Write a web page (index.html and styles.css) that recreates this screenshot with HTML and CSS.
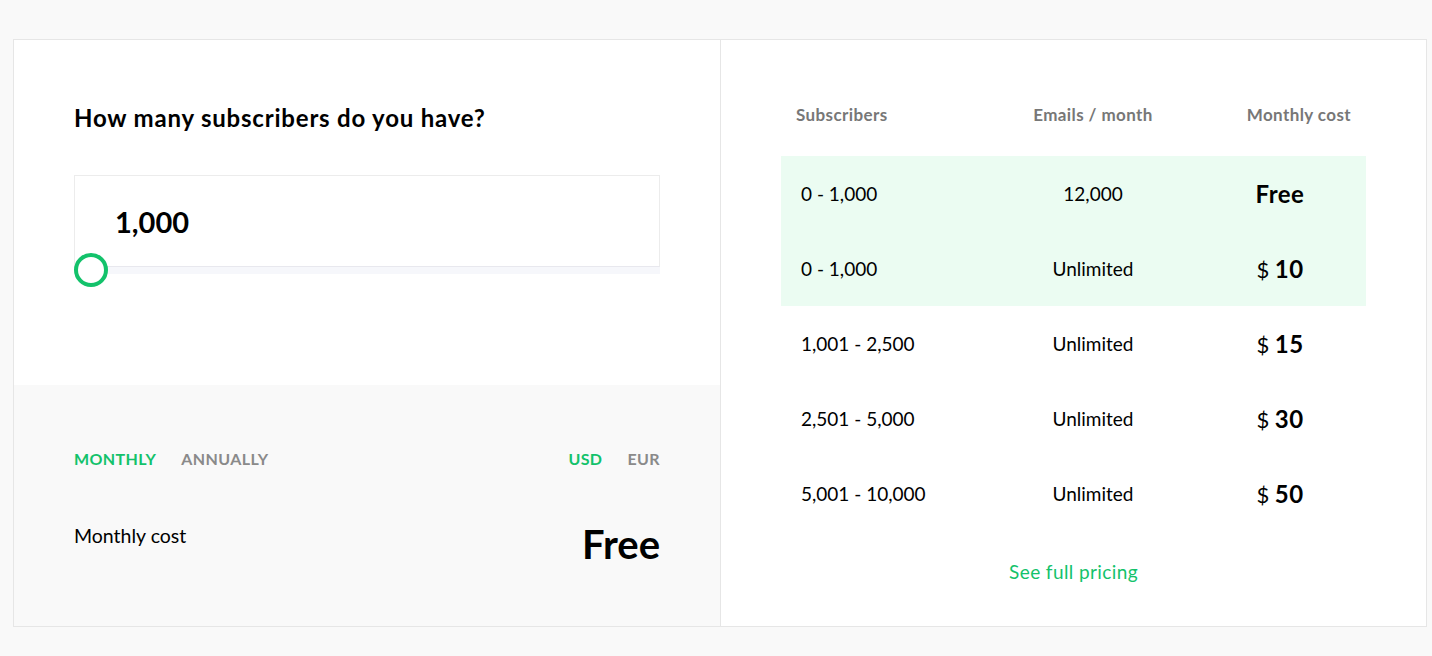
FILE: index.html
```html
<!DOCTYPE html>
<html lang="en">

<head>
    <meta charset="utf-8">
    <meta name="viewport" content="width=device-width, initial-scale=1.0">
    <title>Pricing</title>
    <link rel="stylesheet" href="styles.css">
</head>

<body>
    <section class="kort">
        <div class="venstre">
            <div class="beregner">
                <h2>How many subscribers do you have?</h2>
                <div class="felt">
                    <p class="antal">1,000</p>
                </div>
                <div class="spor">
                    <span class="knop"></span>
                </div>
            </div>
            <div class="resultat">
                <div class="skift">
                    <nav>
                        <button class="valgt">MONTHLY</button>
                        <button>ANNUALLY</button>
                    </nav>
                    <nav>
                        <button class="valgt">USD</button>
                        <button>EUR</button>
                    </nav>
                </div>
                <div class="pris-linje">
                    <p>Monthly cost</p>
                    <p class="pris">Free</p>
                </div>
            </div>
        </div>
        <div class="hojre">
            <div class="tabel">
                <div class="raekke hoved">
                    <span>Subscribers</span>
                    <span>Emails / month</span>
                    <span>Monthly cost</span>
                </div>
                <div class="raekke aktiv">
                    <span>0 - 1,000</span>
                    <span>12,000</span>
                    <span><b>Free</b></span>
                </div>
                <div class="raekke aktiv">
                    <span>0 - 1,000</span>
                    <span>Unlimited</span>
                    <span>$ <b>10</b></span>
                </div>
                <div class="raekke">
                    <span>1,001 - 2,500</span>
                    <span>Unlimited</span>
                    <span>$ <b>15</b></span>
                </div>
                <div class="raekke">
                    <span>2,501 - 5,000</span>
                    <span>Unlimited</span>
                    <span>$ <b>30</b></span>
                </div>
                <div class="raekke">
                    <span>5,001 - 10,000</span>
                    <span>Unlimited</span>
                    <span>$ <b>50</b></span>
                </div>
            </div>
            <a href="#" class="fuld">See full pricing</a>
        </div>
    </section>
</body>

</html>
```

FILE: styles.css
```css
body {
    margin: 0;
    padding: 39px 5px 29px 13px;
    font-family: 'Lato', sans-serif;
    background: #f9f9f9;
    color: #000;
}

p {
    margin: 0;
}

.kort {
    display: flex;
    width: 1412px;
    height: 586px;
    background: #fff;
    border: 1px solid #e6e6e6;
}

.venstre {
    width: 706px;
    display: flex;
    flex-direction: column;
    border-right: 1px solid #e6e6e6;
}

.beregner {
    height: 345px;
    padding: 0 60px;
}

h2 {
    margin: 63px 0 0;
    font-size: 24px;
    font-weight: 700;
    line-height: 30px;
    letter-spacing: 0.8px;
}

.felt {
    margin-top: 42px;
    height: 90px;
    border: 1px solid #ececec;
    border-bottom-color: #e8e8ee;
    display: flex;
    align-items: center;
}

.antal {
    margin-left: 40px;
    font-size: 29px;
    font-weight: 700;
}

.spor {
    position: relative;
    height: 7px;
    background: #f6f7fb;
}

.knop {
    position: absolute;
    left: 0;
    top: -14px;
    width: 26px;
    height: 26px;
    border: 4px solid #13c26b;
    border-radius: 50%;
    background: #fff;
}

.resultat {
    flex: 1;
    background: #f9f9f9;
    padding: 64px 60px 0;
}

.skift {
    display: flex;
    justify-content: space-between;
}

nav {
    display: flex;
    gap: 25px;
}

button {
    background: none;
    border: none;
    padding: 0;
    font-family: 'Lato', sans-serif;
    font-size: 16px;
    font-weight: 700;
    line-height: 20px;
    letter-spacing: 0.4px;
    color: #8a8a8a;
}

button.valgt {
    color: #13c26b;
}

.pris-linje {
    margin-top: 55px;
    display: flex;
    justify-content: space-between;
    align-items: flex-start;
}

.pris-linje p {
    font-size: 19.5px;
    line-height: 24px;
}

.pris-linje .pris {
    margin-top: -4px;
    font-size: 40px;
    line-height: 48px;
    font-weight: 700;
}

.hojre {
    flex: 1;
    padding: 60px 60px 0;
    display: flex;
    flex-direction: column;
}

.raekke {
    display: grid;
    grid-template-columns: 209px 206px 170px;
    align-items: center;
    height: 75px;
    font-size: 19px;
}

.raekke span:nth-child(2),
.raekke span:nth-child(3) {
    text-align: center;
}

.raekke span:first-child {
    padding-left: 20px;
}

.raekke span:last-child {
    font-size: 22px;
    margin-left: -2px;
}

.raekke b {
    font-size: 24px;
    font-weight: 700;
    letter-spacing: 0.5px;
}

.raekke.hoved {
    height: 28px;
    margin-bottom: 28px;
    font-size: 17px;
    font-weight: 700;
    letter-spacing: 0.4px;
    color: #777;
}

.raekke.hoved span:last-child {
    font-size: 17px;
    margin-left: 0;
    text-align: right;
    padding-right: 15px;
}

.raekke.hoved span:first-child {
    padding-left: 15px;
}

.aktiv {
    background: #ebfcf2;
}

.fuld {
    margin-top: 29px;
    text-align: center;
    font-size: 19px;
    letter-spacing: 0.4px;
    color: #13c26b;
    text-decoration: none;
}
```
